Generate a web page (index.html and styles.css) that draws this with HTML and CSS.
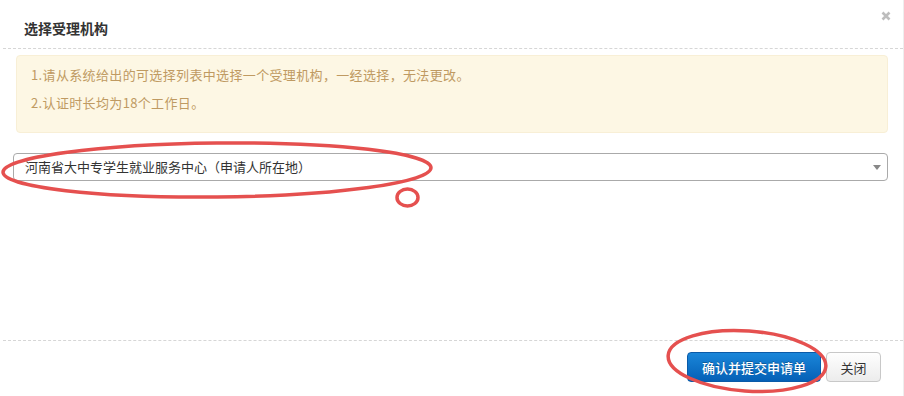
FILE: index.html
```html
<!DOCTYPE html>
<html lang="zh-CN">
<head>
<meta charset="utf-8">
<title>选择受理机构</title>
<link rel="stylesheet" href="styles.css">
</head>
<body>
<div class="modal">
  <div class="modal-header">
    <h3 class="modal-title">选择受理机构</h3>
    <button class="close" type="button" aria-label="关闭">
      <svg width="10" height="10" viewBox="0 0 10 10"><path d="M1.5 1.5 L8.5 8.5 M8.5 1.5 L1.5 8.5" stroke="#bdbdbd" stroke-width="2.6" stroke-linecap="butt"/></svg>
    </button>
  </div>
  <div class="modal-body">
    <div class="alert">
      <p>1.请从系统给出的可选择列表中选择一个受理机构，一经选择，无法更改。</p>
      <p>2.认证时长均为18个工作日。</p>
    </div>
    <div class="select">
      <span class="select-text">河南省大中专学生就业服务中心（申请人所在地）</span>
      <span class="caret"></span>
    </div>
  </div>
  <div class="modal-footer">
    <button class="btn btn-primary" type="button">确认并提交申请单</button>
    <button class="btn btn-default" type="button">关闭</button>
  </div>
  <svg class="annot" width="904" height="396" viewBox="0 0 904 396">
    <ellipse cx="217" cy="170" rx="214" ry="27" fill="none" stroke="#e5504f" stroke-width="3.5" transform="rotate(-0.6 217 170)"/>
    <ellipse cx="407.5" cy="197.5" rx="10.5" ry="8.5" fill="none" stroke="#e5504f" stroke-width="3.5"/>
    <ellipse cx="747" cy="361" rx="79" ry="30" fill="none" stroke="#e5504f" stroke-width="3.5" transform="rotate(4 747 361)"/>
  </svg>
</div>
</body>
</html>
```
FILE: styles.css
```css
* { box-sizing: border-box; }
html, body { margin: 0; padding: 0; background: #fff; }
body {
  font-family: "Noto Sans CJK SC", "Liberation Sans", sans-serif;
  font-size: 13px;
  color: #333;
}
.modal {
  position: relative;
  width: 904px;
  height: 396px;
  display: flex;
  flex-direction: column;
  border-right: 1px solid #eee;
}
.modal-header {
  height: 49px;
  margin-left: 3px;
  padding: 8px 11px 0 21px;
  border-bottom: 1px dashed #d6d6d6;
  display: flex;
  align-items: center;
  justify-content: space-between;
}
.modal-title {
  margin: 0;
  font-size: 14px;
  font-weight: bold;
  color: #333;
  line-height: 20px;
}
.close {
  align-self: flex-start;
  margin-top: 2px;
  padding: 0;
  border: 0;
  background: none;
  width: 12px;
  height: 12px;
  display: flex;
  align-items: center;
  justify-content: center;
}
.modal-body {
  flex: 1;
  padding: 6px 15px 0 13px;
}
.alert {
  margin-left: 3px;
  height: 78px;
  padding: 5px 14px 0;
  background: #fdf7e4;
  border: 1px solid #f8efd6;
  border-radius: 4px;
  color: #bf9a62;
}
.alert p {
  margin: 0;
  line-height: 28px;
  font-size: 13px;
  letter-spacing: 0.35px;
}
.select {
  margin-top: 20px;
  height: 28px;
  border: 1px solid #aaa;
  border-radius: 4px;
  display: flex;
  align-items: center;
  justify-content: space-between;
  padding: 0 6px 0 11px;
  color: #333;
}
.select-text { font-size: 13px; line-height: 26px; }
.caret {
  width: 0;
  height: 0;
  border-left: 4px solid transparent;
  border-right: 4px solid transparent;
  border-top: 5px solid #888;
}
.modal-footer {
  height: 56px;
  margin-left: 3px;
  border-top: 1px dashed #d6d6d6;
  padding: 11px 22px 0 0;
  display: flex;
  justify-content: flex-end;
  align-items: flex-start;
  gap: 5px;
}
.btn {
  height: 30px;
  font-family: "Noto Sans CJK SC", "Liberation Sans", sans-serif;
  font-size: 13px;
  border-radius: 4px;
  padding: 0;
  cursor: pointer;
}
.btn-primary {
  width: 134px;
  color: #fff;
  font-weight: 500;
  border: 1px solid #0a5aa8;
  background: linear-gradient(#1a86d9, #0560b6);
  text-shadow: 0 -1px 0 rgba(0,0,0,0.25);
}
.btn-default {
  width: 55px;
  color: #333;
  border: 1px solid #c8c8c8;
  background: linear-gradient(#fefefe, #ececec);
}
.annot {
  position: absolute;
  left: 0;
  top: 0;
  pointer-events: none;
}
```
